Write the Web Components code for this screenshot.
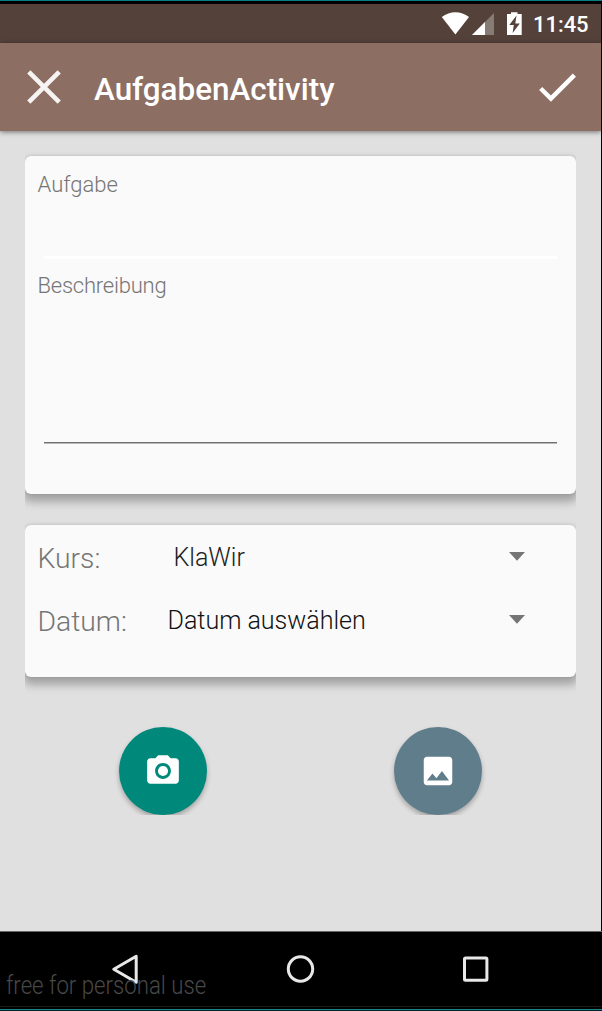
<!DOCTYPE html>
<html lang="de">
<head>
<meta charset="utf-8">
<title>AufgabenActivity</title>
<style>
html,body{margin:0;height:100%;background:#000}
body{font-family:Roboto,"Noto Sans",sans-serif}
</style>
</head>
<body>
<task-screen></task-screen>
<script>
const define = (name, css, html) => customElements.define(name, class extends HTMLElement {
  constructor() {
    super();
    const t = document.createElement('template');
    t.innerHTML = `<style>*{box-sizing:border-box}svg{display:block}${css}</style>${html}`;
    this.attachShadow({mode: 'open'}).append(t.content.cloneNode(true));
  }
});

define('status-bar', `
:host{display:flex;height:39px;background:#54423a;color:#fff;box-sizing:border-box;padding-left:441px;align-items:flex-start}
svg{flex:none}
span{font-size:22px;font-weight:500;line-height:26px;margin:8px 0 0 11px;letter-spacing:-.05px;white-space:nowrap}`, `
<svg width="81" height="39" fill="#fff">
<path d="M.8 13C8.8 6.7 20 6.7 28 13L14.4 30.5Z"/>
<path d="M53 9v22H31z" opacity=".3"/><path d="M44 18v13H31z"/>
<path d="M66 10H70V8.200h6.500V10H80.700v21H66z"/>
<path d="M75.500 11.500l-7.200 9.600h4.500l-1.200 8 7.200-9.700h-4.500z" fill="#54423a"/>
</svg><span><slot></slot></span>`);

define('app-toolbar', `
:host{display:flex;position:relative;z-index:1;height:88px;align-items:center;background:#8c6e63;color:#fff;box-sizing:border-box;padding:0 25px 0 26px;box-shadow:0 1px 5px rgba(0,0,0,.5)}
h1{font-size:31.4px;font-weight:500;line-height:38px;margin:5px 0 0 32px;letter-spacing:0;flex:1;white-space:nowrap}
.close{opacity:.92}`, `
<svg class="close" width="36" height="36" viewBox="0 0 36 36" fill="none" stroke="#fff" stroke-width="4.600"><path d="M2.800 2.800l30.400 30.400M33.200 2.800L2.800 33.200"/></svg>
<h1><slot></slot></h1>
<svg width="38" height="30" viewBox="0 0 38 30" fill="none" stroke="#fff" stroke-width="4.400"><path d="M2.700 16.500L12.900 26.600 36.400 3.100"/></svg>`);

define('paper-card', `
:host{display:block;clip-path:inset(-20px 0 -20px 0)}
div{height:100%;background:#fafafa;border-radius:6px;box-shadow:0 6px 8px 2px rgba(0,0,0,.27),0 0 3px rgba(0,0,0,.12);overflow:hidden}`, `<div><slot></slot></div>`);

define('text-field', `
:host{display:flex;flex-direction:column;box-sizing:border-box;padding:0 19px 0 13px;font-size:22px;line-height:26px;font-weight:300;color:#757575}
label{flex:1;margin-left:-.5px;letter-spacing:var(--track,0)}
i{display:block;margin-left:6px;height:var(--line-h,2px);background:var(--line,linear-gradient(#707070 50%,#b8b8b8 50%))}`, `<label><slot></slot></label><i></i>`);

define('spinner-row', `
:host{display:grid;grid-template-columns:var(--start,135.500px) 1fr 16px;align-items:center;height:63px;padding:0 51.500px 0 13px;box-sizing:border-box;font-weight:300;white-space:nowrap}
label{font-size:28.3px;line-height:34px;color:#757575;margin-left:-.5px}
span{font-size:25.1px;line-height:30px;color:var(--ink,#212121);margin-top:-2px;letter-spacing:-.03px}
svg{margin-top:-5px}`, `
<label><slot name="label"></slot></label><span><slot></slot></span>
<svg width="16" height="9"><path d="M0 0h16L8 8.8z" fill="#757575"/></svg>`);

define('round-button', `
:host{display:block;width:88px;height:88px;clip-path:inset(-10px -10px 0 -10px)}
div{height:88px;border-radius:50%;background:var(--fill);box-shadow:0 3px 5px rgba(0,0,0,.28);display:flex;align-items:center;justify-content:center;color:#fff}
::slotted(svg){display:block;margin-top:-1px}`, `<div><slot></slot></div>`);

define('nav-bar', `
:host{display:block;position:relative;height:80px;background:#000}
.edge{height:1px;background:#666}
.icons{display:grid;grid-template-columns:110px 175px 176px auto;height:74px;padding-top:24px}
.icons svg{overflow:visible}
.icons svg:first-child{grid-column:2}
.base{height:5px;background:linear-gradient(#1c1814 1px,#000 1px 3px,#178487 3px 4px,#062426 4px)}
span{position:absolute;left:6px;top:40px;font-size:25.1px;line-height:30px;font-weight:300;color:#484848;white-space:nowrap;transform:scaleX(.885);transform-origin:0 0}`, `
<div class="edge"></div><span><slot></slot></span>
<div class="icons">
<svg width="30" height="30" fill="none" stroke="#e8e8e8" stroke-width="3" stroke-linejoin="round"><path d="M26.200 .3V26.200L3.800 13.200z"/></svg>
<svg width="30" height="30" fill="none" stroke="#e8e8e8" stroke-width="3"><circle cx="15.500" cy="13" r="12.200"/></svg>
<svg width="30" height="30" fill="none" stroke="#e8e8e8" stroke-width="3"><rect x="3.500" y="1.900" width="22.400" height="22.400" rx="1"/></svg>
</div><div class="base"></div>`);

define('task-screen', `
:host{display:flex;flex-direction:column;width:602px;height:1011px;background:#000;overflow:hidden}
.top{height:4px;background:linear-gradient(#087d82 1px,#000 1px)}
status-bar,app-toolbar,main{margin-right:1px}
main{flex:1;background:#e0e0e0;padding:25px 25px 0}
.form{height:337.500px}
.picks{height:152px;margin-top:31.500px}
.a{height:103px;padding-top:16px;--line:#fff;--line-h:3px;--track:0}
.b{height:185px;padding-top:14px;--track:-.22px}
.actions{display:flex;justify-content:space-between;padding:50px 94px 0}
.k{margin-top:2px}
.d{--start:129.500px;--ink:#111}
b{font-weight:300}`, `
<div class="top"></div>
<status-bar>11:45</status-bar>
<app-toolbar>AufgabenActivity</app-toolbar>
<main>
<paper-card class="form"><text-field class="a">Aufgabe</text-field><text-field class="b">Beschreibung</text-field></paper-card>
<paper-card class="picks">
<spinner-row class="k"><b slot="label">Kurs:</b>KlaWir</spinner-row>
<spinner-row class="d"><b slot="label">Datum:</b>Datum auswählen</spinner-row>
</paper-card>
<div class="actions">
<round-button style="--fill:#00897b"><svg width="38" height="38" viewBox="0 0 24 24" fill="#fff"><circle cx="12" cy="12" r="3.2"/><path d="M9 2L7.17 4H4c-1.1 0-2 .9-2 2v12c0 1.1.9 2 2 2h16c1.1 0 2-.9 2-2V6c0-1.1-.9-2-2-2h-3.17L15 2H9zm3 15c-2.76 0-5-2.24-5-5s2.24-5 5-5 5 2.24 5 5-2.24 5-5 5z"/></svg></round-button>
<round-button style="--fill:#607d8b"><svg width="38" height="38" viewBox="0 0 24 24" fill="#fff"><path d="M21 19V5c0-1.1-.9-2-2-2H5c-1.1 0-2 .9-2 2v14c0 1.1.9 2 2 2h14c1.1 0 2-.9 2-2zM8.500 13.500l2.500 3.010L14.500 12l4.500 6H5l3.500-4.500z"/></svg></round-button>
</div>
</main>
<nav-bar>free for personal use</nav-bar>`);
</script>
</body>
</html>
